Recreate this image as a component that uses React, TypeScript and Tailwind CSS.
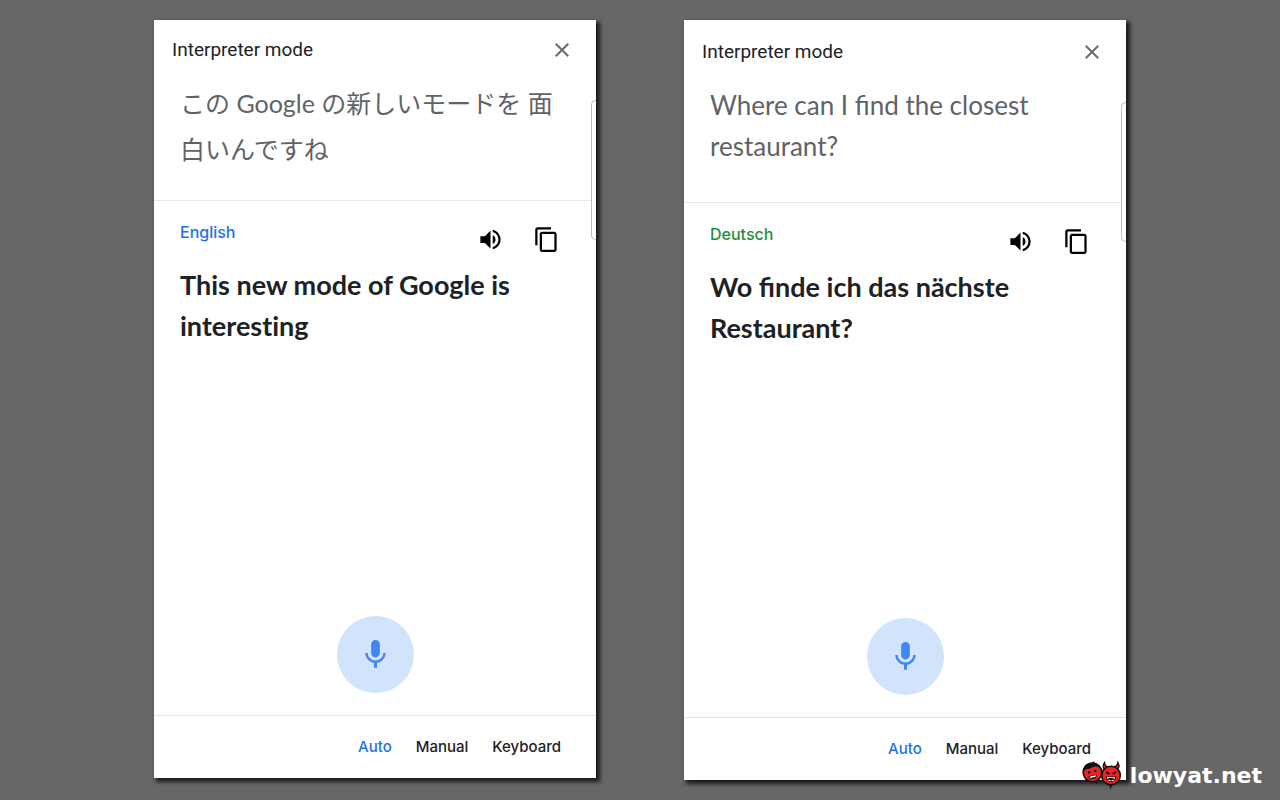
import { MdClose, MdContentCopy, MdMic, MdVolumeUp } from "react-icons/md";

type CardProps = {
  source: string;
  sourceLang: string;
  sourceClass: string;
  language: string;
  languageClass: string;
  translation: string;
  translationLang: string;
  translationClass: string;
  className: string;
};

const modes = ["Auto", "Manual", "Keyboard"];

function InterpreterCard(props: CardProps) {
  return (
    <section
      className={`flex flex-col bg-white shadow-[3px_3px_4px_1px_rgba(0,0,0,0.75)] ${props.className}`}
    >
      <header className="flex h-[60px] items-center justify-between pr-[22px] pl-[18px]">
        <h1 className="font-[Roboto,sans-serif] text-[19px] leading-6 text-[#202124]">Interpreter mode</h1>
        <button type="button" aria-label="Close" className="text-[#6b6b6b]">
          <MdClose size={24} />
        </button>
      </header>
      <div className="relative min-h-[121px] border-b border-[#e6e8ee] pr-10 pl-[26px]">
        <p lang={props.sourceLang} className={`text-[#5f6368] ${props.sourceClass}`}>
          {props.source}
        </p>
        <div className="absolute top-5 right-0 h-[140px] w-[5px] rounded-l-[5px] border-y border-l border-[#bdbdbd] bg-white" />
      </div>
      <div className="flex-1 pt-[19px] pr-9 pl-[26px]">
        <div className="flex items-start justify-between">
          <h2 className={`font-[Inter,sans-serif] text-[16px] leading-6 font-medium ${props.languageClass}`}>
            {props.language}
          </h2>
          <div className="mt-1.5 flex gap-[29px] text-black">
            <button type="button" aria-label="Listen">
              <MdVolumeUp size={27} />
            </button>
            <button type="button" aria-label="Copy">
              <MdContentCopy size={27} />
            </button>
          </div>
        </div>
        <p
          lang={props.translationLang}
          className={`mt-[11px] text-[27px] leading-[41px] font-bold text-[#202124] ${props.translationClass}`}
        >
          {props.translation}
        </p>
      </div>
      <div className="flex justify-center pb-[22px]">
        <button
          type="button"
          aria-label="Speak"
          className="flex size-[77px] items-center justify-center rounded-full bg-[#d2e3fc] text-[#4285f4]"
        >
          <MdMic size={35} />
        </button>
      </div>
      <nav className="flex h-[63px] items-center justify-end gap-6 border-t border-[#e4e4e4] pr-[35px] font-[Inter,sans-serif] text-[15px] leading-5 font-medium">
        {modes.map((mode) => (
          <button key={mode} type="button" className={mode === "Auto" ? "text-[#1a73e8]" : "text-[#202124]"}>
            {mode}
          </button>
        ))}
      </nav>
    </section>
  );
}

function Mascots() {
  return (
    <svg viewBox="0 0 40 30" className="h-[30px] w-10" aria-hidden="true">
      <path d="M11.500 18 L14.500 23.500 L16 18Z" fill="#111" />
      <circle cx="10.500" cy="11.500" r="9.300" fill="#ec2227" stroke="#111" strokeWidth="1.600" />
      <path d="M1.200 10.500 C1 4 6 1.200 10.500 1.500 L12 .2 L12.800 1.800 C16 2.500 18 4.500 18.500 7 C14 4.500 10 5.500 7.500 8 C5 7.500 3 8.500 1.200 10.500Z" fill="#111" />
      <circle cx="7.200" cy="11.500" r="1.200" fill="#111" />
      <circle cx="13.200" cy="10" r="1.200" fill="#111" />
      <path d="M6 15.500 L15 13.500 C15 19 8 19.500 6 15.500Z" fill="#111" />
      <path d="M7.500 15.700 L13.800 14.300 L13.600 15.700 L8.300 17Z" fill="#fff" />
      <path d="M26.500 22 L28.500 28.500 L31 22Z" fill="#111" />
      <path d="M22.500 9 C20.500 6 21 3.500 22.600 1.400 C22.700 4 24 5.500 26.500 6Z" fill="#ec2227" stroke="#111" strokeWidth="1.200" />
      <path d="M35 9 C38 6.500 37.500 4 35.800 1.400 C35.600 4 34 5.500 31.500 6Z" fill="#ec2227" stroke="#111" strokeWidth="1.200" />
      <circle cx="29" cy="14.500" r="9.300" fill="#ec2227" stroke="#111" strokeWidth="1.600" />
      <path d="M23.500 10 L28 12 L27 13.500 L24.500 13Z M34.500 10 L30 12 L31 13.500 L33.500 13Z" fill="#111" />
      <path d="M23.500 15.500 H34.500 C34 22.500 24 22.500 23.500 15.500Z" fill="#111" />
      <path d="M24.800 16.200 H33.200 L32.300 18.500 L31.200 17 H26.800 L25.700 18.500Z M26 20 L27 18.500 L28 19.500 H30 L31 18.500 L32 20Z" fill="#fff" />
    </svg>
  );
}

export default function App() {
  return (
    <main className="relative grid min-h-screen grid-cols-2 gap-[88px] bg-[#676767] px-[154px] py-5 font-[Lato,'Noto_Sans_CJK_JP',sans-serif]">
      <InterpreterCard
        source="この Google の新しいモードを 面白いんですね"
        sourceLang="ja"
        sourceClass="text-[25px] leading-[46px]"
        language="English"
        languageClass="text-[#1a73e8]"
        translation="This new mode of Google is interesting"
        translationLang="en"
        translationClass="[font-variant-ligatures:none]"
        className="mb-0.5"
      />
      <InterpreterCard
        source="Where can I find the closest restaurant?"
        sourceLang="en"
        sourceClass="pt-[3px] text-[26px] leading-[41px]"
        language="Deutsch"
        languageClass="text-[#1e8e3e]"
        translation="Wo finde ich das nächste Restaurant?"
        translationLang="de"
        translationClass=""
        className="pt-0.5"
      />
      <a
        href="#lowyat"
        className="absolute right-[18px] bottom-[9px] flex items-center gap-2 font-['DejaVu_Sans',sans-serif] text-[22px] leading-7 font-bold text-white"
      >
        <Mascots />
        lowyat.net
      </a>
    </main>
  );
}
